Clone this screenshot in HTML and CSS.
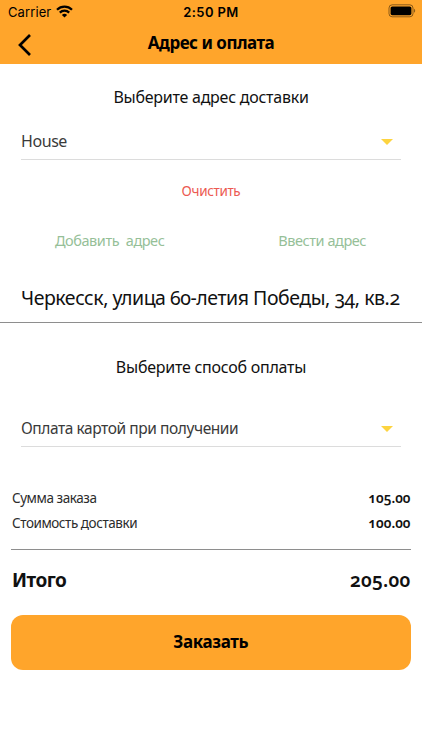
FILE: index.html
```html
<!DOCTYPE html>
<html lang="ru">
<head>
  <meta charset="utf-8">
  <title>Адрес и оплата</title>
  <meta name="viewport" content="width=device-width,initial-scale=1">
  <link rel="stylesheet" href="styles.css">
</head>

<body>
  <header class="header">
    <div class="status-bar">
      <div class="carrier">
        <span class="carrier-name">Carrier</span>
        <svg class="wifi" width="17" height="13" viewBox="0 0 17 13" fill="none" stroke="#000" stroke-width="2.3">
          <path d="M1 4.7C5.2.6 11.8.6 16 4.7"/>
          <path d="M3.8 7.6c2.7-2.6 6.7-2.6 9.4 0"/>
          <path d="M8.5 12.5 5.9 9.9c1.5-1.4 3.7-1.4 5.2 0z" fill="#000" stroke="none"/>
        </svg>
      </div>
      <span class="time">2:50 PM</span>
      <svg class="battery" width="28" height="14" viewBox="0 0 28 14">
        <rect x="1" y=".8" width="24" height="12" rx="3.2" fill="none" stroke="#000" stroke-opacity=".45"/>
        <rect x="2.6" y="2.4" width="20.8" height="8.8" rx="1.7"/>
        <path d="M26 4.8c1.6.6 1.6 3.4 0 4z" fill-opacity=".45"/>
      </svg>
    </div>
    <div class="nav-bar">
      <svg class="back" width="16" height="24" viewBox="0 0 16 24" fill="none" stroke="#000" stroke-width="2.7">
        <path d="M13 2 3 12l10 10"/>
      </svg>
      <h1 class="nav-title">Адрес и оплата</h1>
    </div>
  </header>

  <main>
    <section class="delivery">
      <h2 class="section-title title-address">Выберите адрес доставки</h2>
      <div class="select">
        <span class="house">House</span>
        <i class="arrow"></i>
      </div>
      <a class="clear">Очистить</a>
      <div class="actions">
        <a class="action-add">Добавить&nbsp; адрес</a>
        <a class="action-enter">Ввести адрес</a>
      </div>
      <div class="address">Черкесск, улица 60-летия Победы, 34, кв.2</div>
    </section>

    <section class="payment">
      <h2 class="section-title title-payment">Выберите способ оплаты</h2>
      <div class="select">
        <span class="method">Оплата картой при получении</span>
        <i class="arrow"></i>
      </div>
    </section>

    <section class="summary">
      <div class="row"><span>Сумма заказа</span><b>105.00</b></div>
      <div class="row"><span>Стоимость доставки</span><b>100.00</b></div>
      <div class="total"><span class="total-label">Итого</span><b>205.00</b></div>
      <button class="order">Заказать</button>
    </section>
  </main>
</body>
</html>
```
FILE: styles.css
```css
* {
  box-sizing: border-box;
}

body {
  margin: 0;
  background: #fff;
  color: #111;
  font-family: 'Noto Sans', 'Open Sans', sans-serif;
  font-variant-numeric: oldstyle-nums;
  white-space: nowrap;
}

h1,
h2 {
  margin: 0;
}

.header {
  height: 64px;
  background: #ffa52b;
  color: #000;
}

.status-bar {
  display: grid;
  grid-template-columns: 1fr auto 1fr;
  align-items: center;
  height: 24px;
  padding: 0 6px 0 8px;
  font-family: Inter, sans-serif;
  font-size: 13px;
  font-variant-numeric: normal;
}

.carrier {
  display: flex;
  align-items: center;
  gap: 5px;
}

.carrier-name {
  letter-spacing: .1px;
}

.wifi {
  margin-bottom: 1px;
}

.time {
  padding-right: 2px;
  font-weight: 600;
  letter-spacing: .4px;
}

.battery {
  justify-self: end;
  margin-bottom: 2px;
}

.nav-bar {
  display: grid;
  grid-template-columns: 1fr auto 1fr;
  align-items: center;
  height: 40px;
  padding: 0 17px;
}

.back {
  margin-top: 2px;
}

.nav-title {
  height: 40px;
  font-size: 17px;
  line-height: 38px;
  letter-spacing: -.5px;
}

.section-title {
  font-size: 16px;
  font-weight: 400;
  line-height: 24px;
  letter-spacing: -.25px;
  text-align: center;
}

.title-address {
  padding-top: 21px;
}

.title-payment {
  padding-top: 32px;
}

.select {
  display: flex;
  align-items: center;
  justify-content: space-between;
  height: 38px;
  margin: 13px 21px 0;
  padding-right: 8px;
  border-bottom: 1px solid #dcdcdc;
  color: #3a3a3a;
  font-size: 15.5px;
  letter-spacing: -.43px;
}

.house {
  font-size: 16px;
}

.arrow {
  margin-top: 2px;
  border: 6px solid transparent;
  border-top: 6px solid #fdd440;
  border-bottom: 0;
}

.clear {
  display: block;
  margin-top: 19px;
  color: #ec5a52;
  font-size: 13.5px;
  line-height: 24px;
  letter-spacing: -.35px;
  text-align: center;
}

.actions {
  display: flex;
  justify-content: space-between;
  height: 24px;
  margin-top: 25px;
  padding: 0 56px 0 55px;
  color: #96bf98;
  font-size: 14.5px;
  line-height: 24px;
  letter-spacing: -.45px;
}

.address {
  height: 71px;
  padding: 29px 21px 0;
  border-bottom: 1px solid #8e8e8e;
  font-size: 19.5px;
  line-height: 34px;
  letter-spacing: -.46px;
}

.payment .select {
  margin-top: 30px;
}

.summary {
  padding: 39px 11.5px 0 11px;
}

.row {
  display: flex;
  justify-content: space-between;
  height: 25px;
  padding-left: 1px;
  color: #2c2c2c;
  font-size: 13.5px;
  line-height: 25px;
  letter-spacing: -.45px;
}

.row b {
  color: #111;
  font-weight: 600;
  letter-spacing: 0;
}

.total {
  display: flex;
  justify-content: space-between;
  height: 66px;
  margin-top: 13px;
  padding: 14px 0 0 1px;
  border-top: 1px solid #8e8e8e;
  font-size: 19px;
  font-weight: 700;
  line-height: 32px;
}

.total b {
  font-weight: 600;
  letter-spacing: .2px;
}

.total-label {
  letter-spacing: -.5px;
}

.order {
  display: block;
  width: 100%;
  height: 55px;
  padding: 0 0 2px;
  border: 0;
  border-radius: 12px;
  background: #ffa52b;
  color: #000;
  font: 700 17px 'Noto Sans', sans-serif;
  letter-spacing: -.35px;
}
```
